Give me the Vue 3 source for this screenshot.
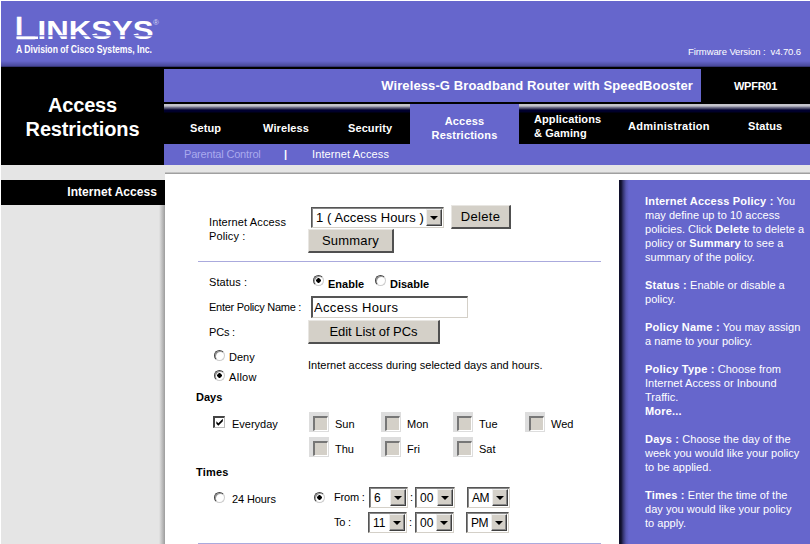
<script setup>
import { ref } from 'vue'

const tabs = [
  { id: 'setup', lines: ['Setup'] },
  { id: 'wireless', lines: ['Wireless'] },
  { id: 'security', lines: ['Security'] },
  { id: 'access', lines: ['Access', 'Restrictions'], active: true },
  { id: 'apps', lines: ['Applications', '& Gaming'] },
  { id: 'admin', lines: ['Administration'] },
  { id: 'status', lines: ['Status'] },
]
const days = ['Sun', 'Mon', 'Tue', 'Wed', 'Thu', 'Fri', 'Sat']
const times = [
  { id: 'from', label: 'From :', hour: '6', minute: '00', half: 'AM' },
  { id: 'to', label: 'To :', hour: '11', minute: '00', half: 'PM' },
]
const policyName = ref('Access Hours')
</script>

<template>
  <div class="page">
    <header class="brand">
      <svg class="logo" width="150" height="44" viewBox="0 0 150 44">
        <text x="-2" y="25" class="logo-cap" textLength="22" lengthAdjust="spacingAndGlyphs">L</text>
        <text x="21.500" y="25" class="logo-word" textLength="116" lengthAdjust="spacingAndGlyphs">INKSYS</text>
        <rect x="0.500" y="22.300" width="21.500" height="2.700" fill="#fff" />
        <rect x="0" y="21.200" width="138" height="1.100" fill="#6666cc" />
        <text x="137" y="11" class="logo-mark">®</text>
        <text x="0" y="38.800" class="logo-sub" textLength="136" lengthAdjust="spacingAndGlyphs">A Division of Cisco Systems, Inc.</text>
      </svg>
      <span class="firmware">Firmware Version : &nbsp;v4.70.6</span>
    </header>

    <div class="masthead">
      <h1 class="section-name">Access<br />Restrictions</h1>
      <div class="mast-main">
        <div class="product-row">
          <div class="product">Wireless-G Broadband Router with SpeedBooster</div>
          <div class="model">WPFR01</div>
        </div>
        <nav class="tabs">
          <div v-for="t in tabs" :key="t.id" :class="['tab', t.id, { active: t.active }]">
            <span v-for="l in t.lines" :key="l">{{ l }}</span>
          </div>
        </nav>
        <nav class="subnav">
          <span class="sub-dim">Parental Control</span>
          <b class="sub-bar">|</b>
          <span class="sub-on">Internet Access</span>
        </nav>
      </div>
    </div>

    <div class="body">
      <aside class="side">
        <div class="side-title">Internet Access</div>
        <div class="side-shadow"></div>
      </aside>

      <div class="content">
        <main class="form">
          <div class="row policy-row">
            <label class="policy-label">Internet Access<br />Policy :</label>
            <div class="policy-controls">
              <div class="select policy-select"><span>1 ( Access Hours )</span><i class="arrow"></i></div>
              <button class="btn delete">Delete</button>
              <button class="btn summary">Summary</button>
            </div>
          </div>
          <div class="rule"></div>

          <div class="row status-row">
            <label class="lbl">Status :</label>
            <div class="options">
              <i class="radio on"></i><b class="enable">Enable</b>
              <i class="radio"></i><b class="disable">Disable</b>
            </div>
          </div>
          <div class="row name-row">
            <label class="lbl name-label">Enter Policy Name :</label>
            <input v-model="policyName" class="name-input" />
          </div>
          <div class="row pcs-row">
            <label class="lbl">PCs :</label>
            <button class="btn edit">Edit List of PCs</button>
          </div>

          <div class="access-row">
            <div class="access-options">
              <div class="choice"><i class="radio"></i><span>Deny</span></div>
              <div class="choice"><i class="radio on"></i><span class="allow">Allow</span></div>
            </div>
            <span class="access-note">Internet access during selected days and hours.</span>
          </div>

          <h2 class="heading days-heading">Days</h2>
          <div class="days-row">
            <div class="everyday">
              <svg class="check" width="12" height="12" viewBox="0 0 10 10">
                <path d="M1.500 3.500v2.800l2.200 2.200 5-5v-2.800l-5 5z" fill="#000" />
              </svg>
              <span>Everyday</span>
            </div>
            <div class="days">
              <div v-for="d in days" :key="d" class="day"><i class="box"></i><span>{{ d }}</span></div>
            </div>
          </div>

          <h2 class="heading times-heading">Times</h2>
          <div class="times-row">
            <div class="all-day"><i class="radio"></i><span>24 Hours</span></div>
            <i class="radio on range-radio"></i>
            <div class="ranges">
              <div v-for="t in times" :key="t.id" :class="['range', t.id]">
                <span class="range-label">{{ t.label }}</span>
                <div class="select hour"><span>{{ t.hour }}</span><i class="arrow"></i></div>
                <span class="colon">:</span>
                <div class="select minute"><span>{{ t.minute }}</span><i class="arrow"></i></div>
                <div class="select half"><span>{{ t.half }}</span><i class="arrow"></i></div>
              </div>
            </div>
          </div>
          <div class="rule end-rule"></div>
        </main>

        <aside class="help">
          <p><b>Internet Access Policy :</b> You<br />may define up to 10 access<br />policies. Click <b>Delete</b> to delete a<br />policy or <b>Summary</b> to see a<br />summary of the policy.</p>
          <p><b>Status :</b> Enable or disable a<br />policy.</p>
          <p><b>Policy Name :</b> You may assign<br />a name to your policy.</p>
          <p><b>Policy Type :</b> Choose from<br />Internet Access or Inbound<br />Traffic.<br /><b>More...</b></p>
          <p><b>Days :</b> Choose the day of the<br />week you would like your policy<br />to be applied.</p>
          <p><b>Times :</b> Enter the time of the<br />day you would like your policy<br />to apply.</p>
        </aside>
      </div>
    </div>
  </div>
</template>

<style>
body { background: #fff; }
</style>

<style scoped>
* { box-sizing: border-box; }
.page {
  width: 810px; height: 544px; overflow: hidden; padding: 1px 0 0 1px;
  font: 11px/14px "Liberation Sans", Arial, sans-serif; color: #000;
  white-space: nowrap;
}
.brand {
  height: 66px; display: flex; justify-content: space-between;
  padding: 13px 9px 0 15px; color: #fff;
  background: linear-gradient(#6666cc 60px, #48489a 65px, #222250 66px);
}
.logo { overflow: visible; }
.logo-cap { font: 31px "Liberation Sans"; fill: #fff; stroke: #fff; stroke-width: .5px; }
.logo-word { font: bold 25px "Liberation Sans"; fill: #fff; }
.logo-mark { font: 8px "Liberation Sans"; fill: #d5d5f4; }
.logo-sub { font: bold 11px "Liberation Sans"; fill: #fff; }
.firmware { font-size: 9.500px; margin-top: 31px; letter-spacing: -.1px; }

.masthead { display: flex; height: 98px; background: #000; }
.section-name {
  width: 163px; margin: 0; padding-top: 26px; text-align: center;
  font-size: 20px; line-height: 24px; color: #fff; letter-spacing: -.15px;
}
.mast-main { flex: 1; }
.product-row { display: flex; height: 35px; padding-top: 2px; color: #fff; font-weight: bold; }
.product {
  width: 537px; height: 33px; padding-right: 8px; background: #6666cc;
  font-size: 13px; line-height: 33px; text-align: right; letter-spacing: .11px;
}
.model { flex: 1; text-align: center; line-height: 34px; letter-spacing: -.25px; }
.tabs {
  display: flex; height: 42px; color: #fff; font-weight: bold;
  background: linear-gradient(#000 2px, #c4c4cc 2px, #c4c4cc 4px, #85859c 5px, #333355 7px, #000030 8px, #000028 10px, #000 11px);
}
.tab { display: flex; flex-direction: column; padding-top: 19px; letter-spacing: .1px; }
.setup { width: 73px; padding-left: 26px; }
.wireless { width: 85px; padding-left: 26px; }
.security { width: 88px; padding-left: 26px; }
.tab.active { width: 109px; height: 40px; margin-top: 2px; padding-top: 10px; align-items: center; background: #6666cc; letter-spacing: .2px; }
.apps { width: 109px; padding: 10px 0 0 15px; }
.admin { width: 120px; padding: 17px 0 0 0; letter-spacing: .3px; }
.status { padding-top: 17px; }
.subnav { display: flex; height: 21px; background: #6666cc; color: #fff; padding: 3px 0 0 20px; }
.sub-dim { width: 100px; color: #aaaaee; letter-spacing: -.18px; }
.sub-bar { width: 28px; }
.sub-on { letter-spacing: .12px; }

.body { display: flex; height: 379px; }
.side { width: 164px; background: #e5e5e5; padding-top: 15px; }
.side-title {
  height: 25px; background: #000; color: #fff; font-size: 12px; font-weight: bold;
  line-height: 25px; text-align: right; padding-right: 8px; letter-spacing: .05px;
}
.side-shadow { height: 340px; margin-left: 158px; background: linear-gradient(90deg, #e5e5e5, #9c9c9c); }
.content {
  width: 645px; display: flex; padding-top: 9px;
  background: linear-gradient(#e5e5e5 7px, #a0a0a0 8px, #a0a0a0 9px, #fff 9px);
}
.form { width: 454px; padding: 31px 0 0 31px; }
.row { display: grid; grid-template-columns: 102px 1fr; padding-left: 13px; align-items: start; }
.policy-row { grid-template-columns: 99px 1fr; height: 56px; }
.policy-label { padding-top: 10px; letter-spacing: .12px; }
.policy-controls { display: flex; flex-wrap: wrap; width: 210px; }
.select {
  display: flex; background: #fff; height: 21px; padding: 1px; align-items: center;
  border: solid; border-width: 1px; border-color: #555 #d4d0c8 #d4d0c8 #555;
  box-shadow: inset 1px 1px #888; font-size: 12px;
}
.select span { flex: 1; padding-left: 3px; }
.arrow {
  display: flex; flex: none; width: 16px; height: 17px; background: #d4d0c8; align-items: center; justify-content: center;
  border: 1px solid; border-color: #eee #404040 #404040 #eee; box-shadow: inset -1px -1px #888;
}
.arrow::before { content: ''; border: 4px solid transparent; border-top-color: #000; border-bottom: 0; }
.policy-select { width: 133px; margin: 2px 7px 0 3px; font-size: 13px; letter-spacing: .1px; }
.btn {
  height: 24px; padding: 0; background: #d4d0c8; font: 13px/20px "Liberation Sans", Arial, sans-serif;
  border: solid; border-width: 1px 2px 2px 1px; border-color: #e8e6e2 #505050 #505050 #e8e6e2; color: #000;
}
.delete { width: 60px; letter-spacing: .3px; }
.summary { width: 86px; letter-spacing: .2px; }
.rule { width: 403px; height: 1px; margin-left: 2px; background: #aaaadd; }
.status-row { height: 34px; padding-top: 13px; }
.lbl { letter-spacing: .1px; }
.options { display: flex; margin-left: 2px; }
.radio {
  width: 11px; height: 11px; border-radius: 50%; flex: none;
  border: 1px solid; border-color: #444 #ccc #ccc #444; box-shadow: inset 1px 1px #999;
  background: #fff;
}
.radio.on { background: radial-gradient(circle, #000 2px, #fff 2.500px); }
.options b { padding-top: 2px; letter-spacing: 0; }
.enable { width: 47px; margin-left: 4px; }
.disable { margin-left: 4px; }
.name-row { height: 24px; }
.name-label { padding-top: 4px; letter-spacing: -.27px; }
.name-input {
  width: 157px; height: 22px; padding: 0 1px; font: 13px "Liberation Sans", Arial, sans-serif; letter-spacing: .35px;
  border: solid; border-width: 2px 1px 1px 2px; border-color: #555 #d4d0c8 #d4d0c8 #555; outline: 0;
}
.pcs-row { grid-template-columns: 99px 1fr; height: 25px; }
.pcs-row .lbl { padding-top: 5px; letter-spacing: -.2px; }
.edit { width: 132px; letter-spacing: -.05px; }
.access-row { display: flex; padding: 5px 0 0 18px; height: 45px; }
.access-options { width: 94px; }
.choice { display: flex; gap: 4px; height: 20px; }
.access-note { padding-top: 8px; letter-spacing: .02px; }
.allow { letter-spacing: .3px; }
.heading { margin: 0; font-size: 11px; line-height: 14px; letter-spacing: 0; }
.times-heading { letter-spacing: .2px; }
.days-row { display: flex; height: 50px; margin-top: 8px; }
.everyday { display: flex; width: 113px; padding: 4px 0 0 17px; }
.check { border: solid; border-width: 2px 1px 1px 2px; border-color: #444 #bbb #bbb #444; }
.everyday span { margin: 1px 0 0 7px; }
.days { display: grid; grid-template-columns: repeat(4, 72px); grid-auto-rows: 25px; }
.day { display: flex; gap: 6px; }
.day span { padding-top: 5px; }
.box { width: 20px; height: 20px; background: #ddd; padding: 4px; }
.box::before {
  content: ''; display: block; width: 12px; height: 12px; background: #d4d0c8;
  border: solid; border-width: 2px 1px 1px 2px; border-color: #777 #fff #fff #777;
}
.times-heading { margin-top: 3px; }
.times-row { display: flex; height: 56px; margin-top: 8px; }
.all-day { display: flex; gap: 7px; width: 118px; padding: 5px 0 0 18px; letter-spacing: -.1px; }
.range-radio { margin-top: 5px; }
.ranges { margin-left: 9px; }
.range { display: flex; height: 25px; }
.range-label { width: 35px; padding-top: 3px; letter-spacing: -.2px; }
.to .range-label { width: 34px; }
.hour { width: 39px; }
.minute { width: 40px; }
.half { width: 43px; margin-left: 12px; letter-spacing: -.6px; }
.colon { width: 7px; padding: 3px 0 0 2px; }
.to .colon { width: 8px; }
.to .minute { width: 39px; }
.help {
  width: 191px; margin-top: 6px; padding: 14px 0 0 26px; color: #fff; letter-spacing: .03px;
  background: linear-gradient(90deg, #10102c 2px, #33336b 4px, #5757b1 7px, #6666cc 10px);
}
.help b { letter-spacing: .2px; }
.help p { margin: 0 0 14px; }
</style>
